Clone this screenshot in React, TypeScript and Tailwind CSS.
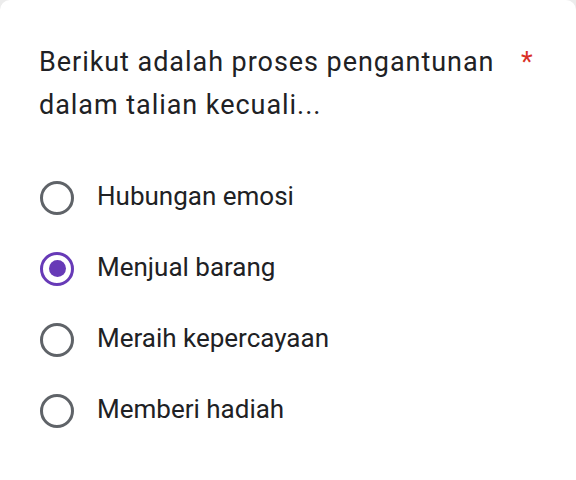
import React from "react";

const options = ["Hubungan emosi", "Menjual barang", "Meraih kepercayaan", "Memberi hadiah"];
const selected = 1;

export default function App() {
  return (
    <div className="w-[576px] h-[480px] bg-[#ececec] overflow-hidden" style={{ fontFamily: "Roboto, 'Noto Sans', sans-serif" }}>
      <div className="w-full h-full bg-white rounded-t-[10px] pl-[39px] pt-[41px]">
        <div className="flex">
          <div className="w-[470px] shrink-0 whitespace-nowrap text-[27px] leading-[43px] tracking-[0.95px] text-[#202124]">
            Berikut adalah proses pengantunan
            <br />
            dalam talian kecuali...
          </div>
          <div className="ml-[12px] text-[27px] leading-[43px] text-[#d93025]">*</div>
        </div>
        <div className="mt-[35px] flex flex-col">
          {options.map((o, i) => (
            <div key={o} className="h-[71px] flex items-center">
              {i === selected ? (
                <div className="w-[34px] h-[34px] rounded-full border-[3.5px] border-[#673ab7] flex items-center justify-center ml-[1px]">
                  <div className="w-[17px] h-[17px] rounded-full bg-[#673ab7]" />
                </div>
              ) : (
                <div className="w-[34px] h-[34px] rounded-full border-[3.5px] border-[#5f6368] ml-[1px]" />
              )}
              <span className="ml-[23px] mb-[2px] text-[26px] text-[#202124]">{o}</span>
            </div>
          ))}
        </div>
      </div>
    </div>
  );
}
